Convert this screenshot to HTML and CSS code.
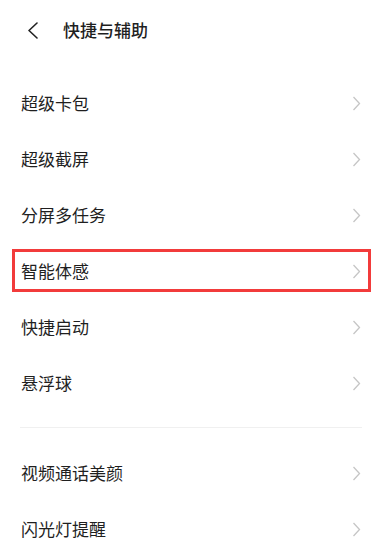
FILE: index.html
```html
<!DOCTYPE html>
<html lang="zh-CN">
<head>
<meta charset="utf-8">
<link rel="stylesheet" href="styles.css">
</head>
<body>
<div class="page">
  <header class="header">
    <svg class="back" width="12" height="17" viewBox="0 0 12 17"><path d="M10 1 L2 8.5 L10 16" fill="none" stroke="#222" stroke-width="1.6" stroke-linecap="round" stroke-linejoin="round"/></svg>
    <div class="title">快捷与辅助</div>
  </header>
  <div class="list">
    <div class="row"><span class="label">超级卡包</span><svg class="chev" width="9" height="15" viewBox="0 0 9 15"><path d="M1.5 1 L7.5 7.5 L1.5 14" fill="none" stroke="#c6c6c6" stroke-width="1.3"/></svg></div>
    <div class="row"><span class="label">超级截屏</span><svg class="chev" width="9" height="15" viewBox="0 0 9 15"><path d="M1.5 1 L7.5 7.5 L1.5 14" fill="none" stroke="#c6c6c6" stroke-width="1.3"/></svg></div>
    <div class="row"><span class="label">分屏多任务</span><svg class="chev" width="9" height="15" viewBox="0 0 9 15"><path d="M1.5 1 L7.5 7.5 L1.5 14" fill="none" stroke="#c6c6c6" stroke-width="1.3"/></svg></div>
    <div class="row highlighted"><span class="label">智能体感</span><svg class="chev" width="9" height="15" viewBox="0 0 9 15"><path d="M1.5 1 L7.5 7.5 L1.5 14" fill="none" stroke="#c6c6c6" stroke-width="1.3"/></svg><div class="mark"></div></div>
    <div class="row"><span class="label">快捷启动</span><svg class="chev" width="9" height="15" viewBox="0 0 9 15"><path d="M1.5 1 L7.5 7.5 L1.5 14" fill="none" stroke="#c6c6c6" stroke-width="1.3"/></svg></div>
    <div class="row"><span class="label">悬浮球</span><svg class="chev" width="9" height="15" viewBox="0 0 9 15"><path d="M1.5 1 L7.5 7.5 L1.5 14" fill="none" stroke="#c6c6c6" stroke-width="1.3"/></svg></div>
  </div>
  <div class="divider"></div>
  <div class="list list2">
    <div class="row"><span class="label">视频通话美颜</span><svg class="chev" width="9" height="15" viewBox="0 0 9 15"><path d="M1.5 1 L7.5 7.5 L1.5 14" fill="none" stroke="#c6c6c6" stroke-width="1.3"/></svg></div>
    <div class="row"><span class="label">闪光灯提醒</span><svg class="chev" width="9" height="15" viewBox="0 0 9 15"><path d="M1.5 1 L7.5 7.5 L1.5 14" fill="none" stroke="#c6c6c6" stroke-width="1.3"/></svg></div>
  </div>
</div>
</body>
</html>
```
FILE: styles.css
```css
html, body {
  margin: 0;
  padding: 0;
  background: #fff;
}
body {
  font-family: "Noto Sans CJK SC", "Noto Sans", sans-serif;
  color: #1f1f1f;
  overflow: hidden;
}
.page {
  width: 379px;
  height: 555px;
  overflow: hidden;
}
.header {
  height: 60px;
  display: flex;
  align-items: center;
  padding-left: 27px;
}
.back {
  display: block;
  margin-top: 0;
}
.title {
  margin-left: 24px;
  font-size: 17px;
  line-height: 20px;
  font-weight: 500;
}
.list {
  padding-top: 15px;
}
.list2 {
  padding-top: 17px;
}
.row {
  position: relative;
  height: 56px;
  display: flex;
  align-items: center;
  justify-content: space-between;
  padding: 0 18px 0 21px;
}
.label {
  font-size: 17px;
  line-height: 20px;
}
.chev {
  display: block;
}
.mark {
  position: absolute;
  left: 12px;
  top: 6px;
  width: 353px;
  height: 37px;
  border: 3px solid #f23b3b;
}
.divider {
  height: 1px;
  margin: 16px 17px 0 20px;
  background: #f0f0f0;
}
```
